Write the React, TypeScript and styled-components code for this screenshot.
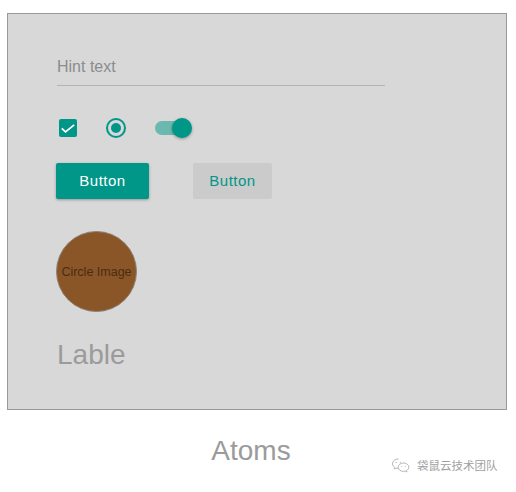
import React from "react";
import styled, { createGlobalStyle } from "styled-components";

const Global = createGlobalStyle`
  html, body { margin: 0; padding: 0; background: #ffffff; }
  body { font-family: "Liberation Sans", Arial, sans-serif; }
`;

const Page = styled.div`
  width: 516px;
  height: 492px;
  padding: 13px 0 0 7px;
  box-sizing: border-box;
`;

const Panel = styled.section`
  width: 500px;
  height: 397px;
  box-sizing: border-box;
  border: 1px solid #999999;
  background: #d8d8d8;
  padding: 43px 0 0 48px;
  display: flex;
  flex-direction: column;
  align-items: flex-start;
`;

const Field = styled.div`
  margin-left: 1px;
  width: 328px;
  padding-bottom: 8px;
  box-sizing: content-box;
  height: 20px;
  border-bottom: 1px solid #b3b3b3;
  font-size: 16px;
  line-height: 20px;
  color: #8c8c8c;
`;

const ControlRow = styled.div`
  margin-top: 30px;
  display: flex;
  align-items: center;
  height: 24px;
`;

const ControlSlot = styled.div<{ $w: number; $gap: number }>`
  width: ${(p) => p.$w}px;
  height: 24px;
  margin-right: ${(p) => p.$gap}px;
  display: flex;
  align-items: center;
  justify-content: flex-start;
  position: relative;
`;

const CheckBox = styled.div`
  margin-left: 3px;
  width: 18px;
  height: 18px;
  border-radius: 2px;
  background: #009688;
  display: flex;
  align-items: center;
  justify-content: center;
`;

const Radio = styled.div`
  width: 20px;
  height: 20px;
  box-sizing: border-box;
  border: 2px solid #009688;
  border-radius: 50%;
  display: flex;
  align-items: center;
  justify-content: center;
  &::after {
    content: "";
    width: 10px;
    height: 10px;
    border-radius: 50%;
    background: #009688;
  }
`;

const SwitchTrack = styled.div`
  width: 34px;
  height: 14px;
  border-radius: 7px;
  background: #6bb8b0;
  position: relative;
`;

const SwitchThumb = styled.div`
  position: absolute;
  right: -3px;
  top: -3px;
  width: 20px;
  height: 20px;
  border-radius: 50%;
  background: #009688;
  box-shadow: 0 1px 3px rgba(0, 0, 0, 0.35);
`;

const ButtonRow = styled.div`
  margin-top: 23px;
  display: flex;
  gap: 44px;
`;

const Button = styled.button<{ $raised?: boolean }>`
  height: 36px;
  border: none;
  border-radius: 2px;
  padding: 0;
  width: ${(p) => (p.$raised ? 93 : 79)}px;
  background: ${(p) => (p.$raised ? "#009688" : "#cbcbcb")};
  color: ${(p) => (p.$raised ? "#ffffff" : "#009688")};
  box-shadow: ${(p) => (p.$raised ? "0 1px 3px rgba(0,0,0,0.3)" : "none")};
  font-family: "Liberation Sans", Arial, sans-serif;
  font-size: 15px;
  letter-spacing: 0.5px;
  line-height: 36px;
`;

const Circle = styled.div`
  margin-top: 32px;
  width: 81px;
  height: 81px;
  box-sizing: border-box;
  border-radius: 50%;
  border: 1px solid #8d8377;
  background: #8a5628;
  display: flex;
  align-items: center;
  justify-content: center;
  font-size: 12.5px;
  color: #4b2c10;
  white-space: nowrap;
`;

const Label = styled.div`
  margin-top: 27px;
  margin-left: 1px;
  font-size: 28px;
  line-height: 32px;
  color: #9b9b9b;
`;

const Footer = styled.footer`
  position: relative;
  width: 500px;
  margin-top: 25px;
  padding-right: 12px;
  box-sizing: border-box;
  text-align: center;
  font-size: 28px;
  line-height: 32px;
  color: #9b9b9b;
`;

const Watermark = styled.div`
  position: absolute;
  left: 384px;
  top: 22px;
  display: flex;
  align-items: center;
  gap: 6px;
  font-family: "Noto Sans CJK SC", sans-serif;
  font-size: 11.5px;
  line-height: 14px;
  color: #a0a0a0;
  white-space: nowrap;
`;

const WeChatIcon = () => (
  <svg width="20" height="16" viewBox="0 0 20 16" fill="none" stroke="#b5b5b5" strokeWidth="1">
    <path d="M7.5 2C4 2 1.5 4.2 1.5 6.8c0 1.5.8 2.8 2.1 3.6l-.5 1.6 1.9-1c.8.2 1.6.4 2.5.4" />
    <path d="M12.5 6c-3 0-5.3 1.9-5.3 4.2s2.3 4.2 5.3 4.2c.6 0 1.2-.1 1.800-.3l1.6.9-.4-1.4c1.4-.8 2.3-2 2.3-3.4 0-2.3-2.3-4.2-5.3-4.2z" />
    <circle cx="5.3" cy="5.3" r=".6" fill="#b5b5b5" stroke="none" />
    <circle cx="9.3" cy="5.3" r=".6" fill="#b5b5b5" stroke="none" />
    <circle cx="10.8" cy="9.4" r=".5" fill="#b5b5b5" stroke="none" />
    <circle cx="14.2" cy="9.4" r=".5" fill="#b5b5b5" stroke="none" />
  </svg>
);

export default function App() {
  return (
    <Page>
      <Global />
      <Panel>
        <Field>Hint text</Field>
        <ControlRow>
          <ControlSlot $w={24} $gap={26}>
            <CheckBox>
              <svg width="14" height="14" viewBox="0 0 14 14">
                <path d="M0.8 7.3l3.7 3.6 8.7-7" fill="none" stroke="#ffffff" strokeWidth="1.8" />
              </svg>
            </CheckBox>
          </ControlSlot>
          <ControlSlot $w={20} $gap={29}>
            <Radio />
          </ControlSlot>
          <ControlSlot $w={37} $gap={0}>
            <SwitchTrack>
              <SwitchThumb />
            </SwitchTrack>
          </ControlSlot>
        </ControlRow>
        <ButtonRow>
          <Button $raised>Button</Button>
          <Button>Button</Button>
        </ButtonRow>
        <Circle>Circle Image</Circle>
        <Label>Lable</Label>
      </Panel>
      <Footer>
        Atoms
        <Watermark>
          <WeChatIcon />
          袋鼠云技术团队
        </Watermark>
      </Footer>
    </Page>
  );
}
